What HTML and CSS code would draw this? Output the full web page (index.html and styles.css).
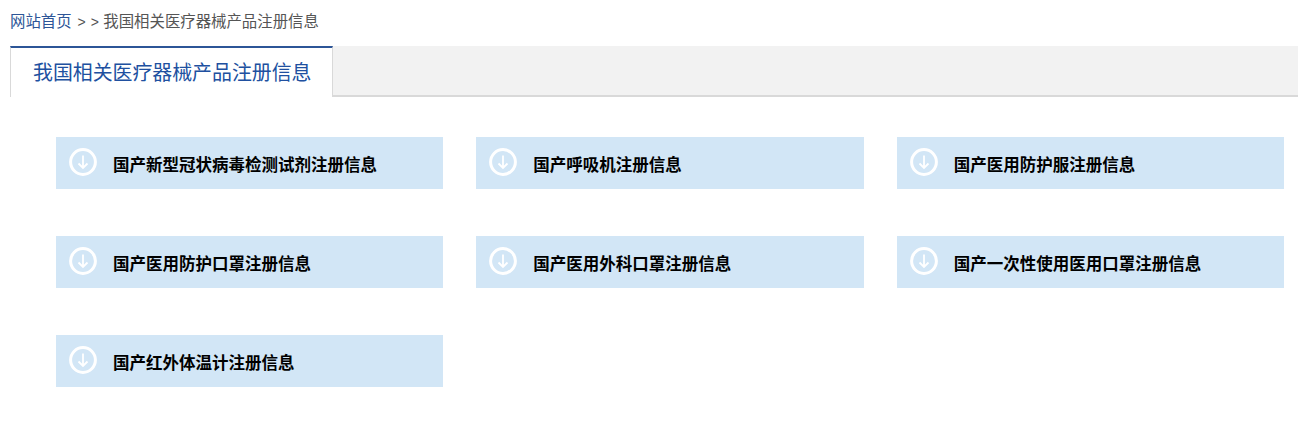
FILE: index.html
```html
<!DOCTYPE html>
<html lang="zh-CN">
<head>
  <meta charset="UTF-8">
  <title>我国相关医疗器械产品注册信息</title>
  <link rel="stylesheet" href="styles.css">
</head>
<body>
  <div class="crumbs"><a href="#">网站首页</a><span class="sep">&gt; &gt;</span><span>我国相关医疗器械产品注册信息</span></div>

  <div class="tabs">
    <div class="tab">我国相关医疗器械产品注册信息</div>
  </div>

  <div class="cards">
    <a class="card" href="#">
      <svg class="icon" viewBox="0 0 28 28"><circle cx="14" cy="14" r="12.4"/><path d="M14 7.500V20M9.500 15.500L14 20l4.500-4.500"/></svg>
      <span>国产新型冠状病毒检测试剂注册信息</span>
    </a>
    <a class="card" href="#">
      <svg class="icon" viewBox="0 0 28 28"><circle cx="14" cy="14" r="12.4"/><path d="M14 7.500V20M9.500 15.500L14 20l4.500-4.500"/></svg>
      <span>国产呼吸机注册信息</span>
    </a>
    <a class="card" href="#">
      <svg class="icon" viewBox="0 0 28 28"><circle cx="14" cy="14" r="12.4"/><path d="M14 7.500V20M9.500 15.500L14 20l4.500-4.500"/></svg>
      <span>国产医用防护服注册信息</span>
    </a>
    <a class="card" href="#">
      <svg class="icon" viewBox="0 0 28 28"><circle cx="14" cy="14" r="12.4"/><path d="M14 7.500V20M9.500 15.500L14 20l4.500-4.500"/></svg>
      <span>国产医用防护口罩注册信息</span>
    </a>
    <a class="card" href="#">
      <svg class="icon" viewBox="0 0 28 28"><circle cx="14" cy="14" r="12.4"/><path d="M14 7.500V20M9.500 15.500L14 20l4.500-4.500"/></svg>
      <span>国产医用外科口罩注册信息</span>
    </a>
    <a class="card" href="#">
      <svg class="icon" viewBox="0 0 28 28"><circle cx="14" cy="14" r="12.4"/><path d="M14 7.500V20M9.500 15.500L14 20l4.500-4.500"/></svg>
      <span>国产一次性使用医用口罩注册信息</span>
    </a>
    <a class="card" href="#">
      <svg class="icon" viewBox="0 0 28 28"><circle cx="14" cy="14" r="12.4"/><path d="M14 7.500V20M9.500 15.500L14 20l4.500-4.500"/></svg>
      <span>国产红外体温计注册信息</span>
    </a>
  </div>
</body>
</html>
```

FILE: styles.css
```css
html, body {
  margin: 0;
  padding: 0;
  background: #fff;
  font-family: "Noto Sans CJK SC", "Liberation Sans", sans-serif;
}

a {
  text-decoration: none;
}

.crumbs {
  height: 46px;
  box-sizing: border-box;
  padding: 9px 0 0 10px;
  font-size: 15.4px;
  line-height: 23px;
  color: #555;
}

.crumbs a {
  color: #2c5597;
}

.sep {
  margin: 0 4px 0 6px;
  font-family: "Liberation Sans", sans-serif;
  font-size: 14px;
  letter-spacing: 0.5px;
}

.tabs {
  height: 49px;
  margin-left: 10px;
  background: #f2f2f2;
  border-bottom: 2px solid #d9d9d9;
  display: flex;
}

.tab {
  width: 323px;
  height: 51px;
  box-sizing: border-box;
  border-top: 2px solid #2c5597;
  border-left: 1px solid #d9d9d9;
  border-right: 1px solid #d9d9d9;
  background: #fff;
  padding-left: 22px;
  font-size: 19.9px;
  line-height: 48px;
  color: #2050a0;
}

.cards {
  display: grid;
  grid-template-columns: repeat(3, 1fr);
  gap: 47px 33px;
  margin: 40px 14px 0 56px;
}

.card {
  height: 52px;
  background: #d2e6f6;
  display: flex;
  align-items: center;
  color: #000;
  font-size: 16.5px;
  font-weight: bold;
}

.card span {
  padding-top: 1px;
}

.icon {
  width: 28px;
  height: 28px;
  margin: -3px 16px 0 13px;
  flex: none;
  fill: none;
  stroke: #fff;
}

.icon circle {
  stroke-width: 3;
}

.icon path {
  stroke-width: 1.8;
}
```
